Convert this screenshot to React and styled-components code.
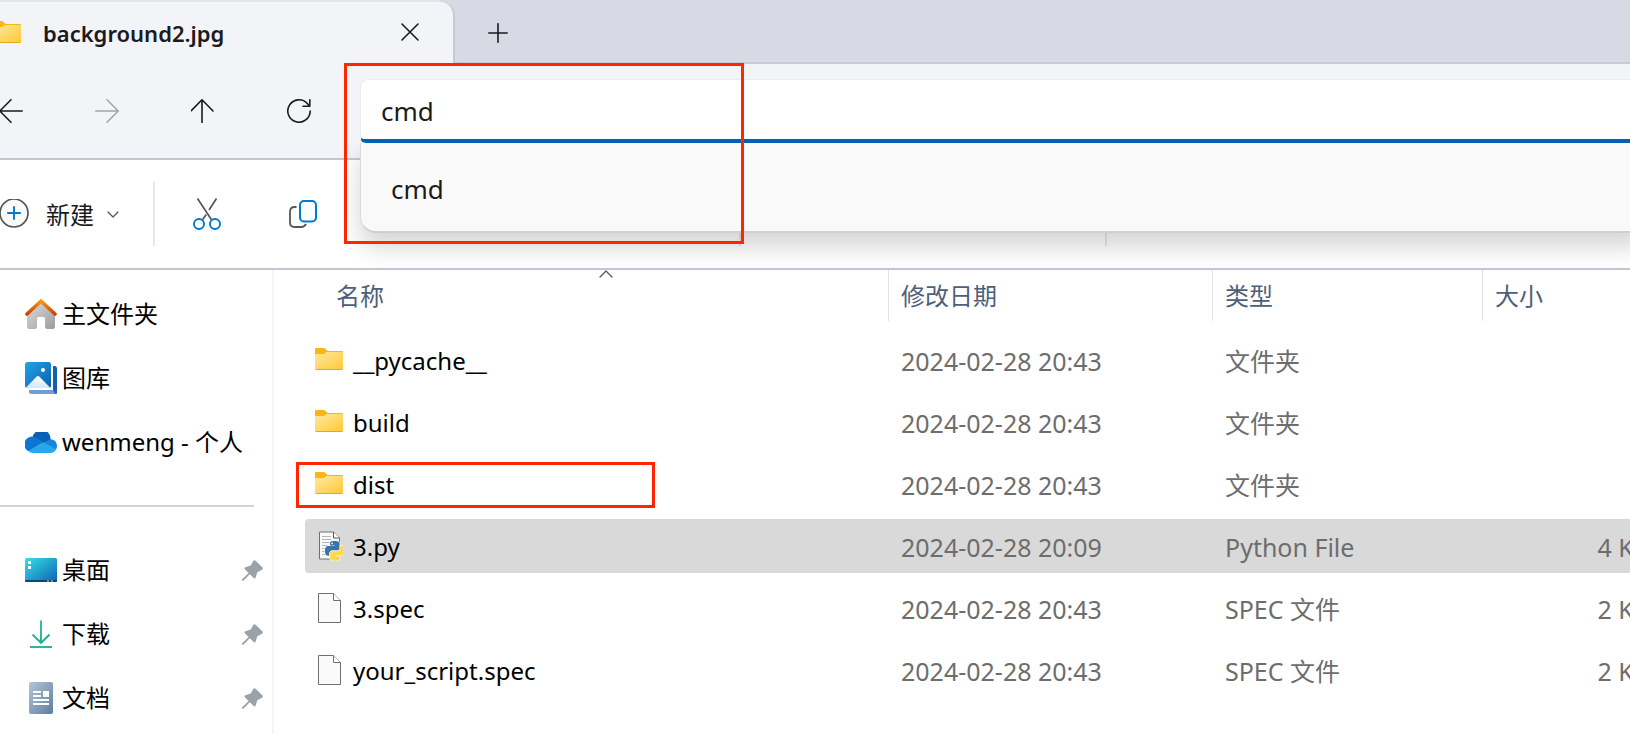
import React from "react";
import styled, { createGlobalStyle, css } from "styled-components";

const GlobalStyle = createGlobalStyle`
  *, *::before, *::after { box-sizing: border-box; }
  body {
    margin: 0;
    background: #fff;
    color: #000;
    font-family: "Noto Sans", "Noto Sans CJK SC", sans-serif;
    font-size: 24px;
    overflow: hidden;
  }
  button, input { font: inherit; color: inherit; }
`;

const Window = styled.div`
  display: flex;
  flex-direction: column;
  min-height: 100vh;
  overflow: hidden;
`;

/* ---------- tab strip ---------- */

const TabStrip = styled.header`
  display: flex;
  height: 64px;
  padding-top: 2px;
  background: linear-gradient(#e4e5ea 0 2px, transparent 2px) 0 0 / 440px 100% no-repeat, #d7d9e5;
  border-bottom: 2px solid #c9cad6;
`;

const Tab = styled.div`
  display: flex;
  align-items: center;
  flex: none;
  width: 455px;
  height: 62px;
  padding: 0 25px 2px 0;
  background: #f3f4f8;
  border-right: 2px solid #c9cad6;
  border-radius: 0 14px 0 0;
`;

const TabIcon = styled.span`
  display: flex;
  flex: none;
  margin-left: -7px;
`;

const TabTitle = styled.span`
  flex: 1;
  padding: 2px 0 0 22px;
  color: #1b1b1f;
  font-size: 22px;
  font-weight: 600;
  line-height: 32px;
`;

const IconButton = styled.button`
  display: flex;
  align-items: center;
  justify-content: center;
  flex: none;
  width: ${(p) => p.$width || 96}px;
  height: ${(p) => p.$height || 64}px;
  padding: 0;
  border: 0;
  background: none;
  color: ${(p) => (p.disabled ? "#a2a4a9" : "#1b1b1f")};
`;

/* ---------- navigation bar ---------- */

const NavBar = styled.div`
  display: flex;
  align-items: flex-start;
  height: 96px;
  background: #f3f4f8;
  border-bottom: 2px solid #c5c5d5;
`;

const NavButtons = styled.nav`
  display: flex;
  flex: none;
  align-items: center;
  height: 94px;
  margin-left: -37px;
`;

const AddressArea = styled.div`
  position: relative;
  z-index: 2;
  flex: 1;
  min-width: 0;
  margin: 15px -16px 0 13px;
`;

const AddressInput = styled.input`
  display: block;
  width: 100%;
  height: 64px;
  padding: 2px 20px 0;
  border: 1px solid #ebebed;
  border-bottom: 4px solid #0063b8;
  border-radius: 8px 8px 6px 6px;
  background: #fff;
  color: #1b1b1b;
  font-size: 26px;
  outline: none;
`;

const Suggestions = styled.ul`
  position: absolute;
  top: 100%;
  left: 0;
  right: 0;
  margin: 0;
  padding: 23px 0 19px;
  list-style: none;
  background: #f9f9f9;
  border: solid #dcdcdc;
  border-width: 0 1px 2px;
  border-bottom-color: #cfcfcf;
  border-radius: 0 0 16px 16px;
  box-shadow: 0 14px 24px rgba(0, 0, 0, 0.17);
`;

const Suggestion = styled.li`
  padding-left: 30px;
  color: #1b1b1b;
  font-size: 26px;
  line-height: 46px;
`;

const markStyle = css`
  position: absolute;
  border: 3px solid #ff2600;
  pointer-events: none;
`;

const AddressMark = styled.span`
  ${markStyle}
  top: -16px;
  left: -16px;
  width: 400px;
  height: 181px;
`;

const RowMark = styled.span`
  ${markStyle}
  top: 5px;
  left: -9px;
  width: 359px;
  height: 46px;
`;

/* ---------- command bar ---------- */

const CommandBar = styled.div`
  display: flex;
  align-items: center;
  height: 110px;
  border-bottom: 2px solid #c5c5d5;
`;

const NewButton = styled.button`
  display: flex;
  align-items: center;
  flex: none;
  width: 153px;
  height: 64px;
  padding: 0;
  border: 0;
  background: none;
  color: #1b1b1b;
`;

const NewLabel = styled.span`
  padding: 2px 13px 0 16px;
  line-height: 32px;
`;

const Divider = styled.span`
  flex: none;
  width: 2px;
  height: 64px;
  margin: 0 4px 0 ${(p) => p.$before || 0}px;
  background: #e8e8e8;
`;

/* ---------- body ---------- */

const Body = styled.div`
  display: flex;
  flex: 1;
  min-width: 0;
`;

const Sidebar = styled.aside`
  flex: none;
  width: 274px;
  padding-top: 12px;
  border-right: 2px solid #f5f5f5;
`;

const SideList = styled.ul`
  margin: 0;
  padding: 0;
  list-style: none;
`;

const SideItem = styled.li`
  display: flex;
  align-items: center;
  height: 64px;
  padding: 0 9px 0 25px;
`;

const SideIcon = styled.span`
  display: flex;
  justify-content: center;
  flex: none;
  width: 32px;
`;

const SideLink = styled.a`
  flex: 1;
  padding-left: 5px;
  color: #000;
  line-height: 32px;
  text-decoration: none;
  white-space: nowrap;
`;

const SideRule = styled.hr`
  height: 2px;
  margin: 31px 18px 31px 0;
  border: 0;
  background: #d4d4d4;
`;

const FilePane = styled.main`
  flex: 1;
  min-width: 0;
  padding-left: 31px;
  overflow: hidden;
`;

const FileTable = styled.table`
  width: 1357px;
  table-layout: fixed;
  border-collapse: separate;
  border-spacing: 0;
`;

const HeadCell = styled.th`
  position: relative;
  height: 59px;
  padding: 0;
  vertical-align: top;
  text-align: left;
  font-weight: 400;
  color: #4c607a;
`;

const HeadLabel = styled.div`
  height: 51px;
  padding-left: ${(p) => (p.$first ? 31 : 12)}px;
  border-left: ${(p) => (p.$first ? "0" : "1px solid #e2e2e2")};
  line-height: 52px;
`;

const SortMark = styled.span`
  position: absolute;
  top: 0;
  left: 294px;
  display: flex;
`;

const Cell = styled.td`
  position: relative;
  height: 62px;
  padding: 2px 0 0 13px;
  border: solid transparent;
  border-width: 4px 0;
  background: ${(p) => (p.$selected ? "#d9d9d9" : "transparent")};
  background-clip: padding-box;
  color: #6d6d6d;
  font-size: 25px;
  line-height: 32px;
  white-space: nowrap;
`;

const NameCell = styled(Cell)`
  padding: 0 0 0 10px;
  border-radius: 4px 0 0 4px / 8px 0 0 8px;
  color: #000;
  font-size: 24px;
`;

const SizeCell = styled(Cell)`
  padding: 2px 12px 0 0;
  text-align: right;
`;

const FileEntry = styled.span`
  display: flex;
  align-items: center;
`;

const FileIcon = styled.span`
  display: flex;
  justify-content: center;
  flex: none;
  width: 28px;
  margin-right: 10px;
  padding-bottom: ${(p) => (p.$kind === "folder" ? 2 : 0)}px;
`;

const FileName = styled.span`
  padding-top: 2px;
`;

/* ---------- icons ---------- */

const Stroke = ({ w = 24, h = 24, sw = 1.6, children, color = "currentColor" }) => (
  <svg width={w} height={h} viewBox={`0 0 ${w} ${h}`} fill="none" stroke={color} strokeWidth={sw} strokeLinecap="round" strokeLinejoin="round" aria-hidden="true">
    {children}
  </svg>
);

const FolderIcon = ({ id }) => (
  <svg width="28" height="22" viewBox="0 0 28 22" aria-hidden="true">
    <defs>
      <linearGradient id={id} x1="0" y1="0" x2="1" y2="1">
        <stop offset="0" stopColor="#ffe8a0" />
        <stop offset="1" stopColor="#ffc934" />
      </linearGradient>
    </defs>
    <path d="M0 1Q0 0 1 0H8.500Q9.600 0 10.500 1L12.500 3H27Q28 3 28 4V8H0Z" fill="#f9b416" />
    <path d="M0 7Q0 6 1 6H8.500Q9.500 6 10.200 5.300L11.200 4H27.500Q28 4 28 5V20.500Q28 22 26.500 22H1.500Q0 22 0 20.500Z" fill={`url(#${id})`} />
    <path d="M.3 20.800Q.6 21.500 1.500 21.500H26.500Q27.500 21.500 27.700 20.800" fill="none" stroke="#e8a81e" />
  </svg>
);

const BlankFileIcon = () => (
  <svg width="23" height="30" viewBox="0 0 23 30" aria-hidden="true">
    <path d="M.5.5H15.500L22.500 7.500V29.500H.5Z" fill="#fafafa" stroke="#707070" />
    <path d="M15.500.5V7.500H22.500" fill="#fff" stroke="#707070" />
  </svg>
);

const PythonFileIcon = () => (
  <svg width="28" height="31" viewBox="0 0 28 31" aria-hidden="true">
    <path d="M4.500 1H18.500L24.500 7V28H4.500Z" fill="#fafafa" stroke="#707070" />
    <path d="M18.500 1V7H24.500" fill="#fff" stroke="#555" />
    <path d="M7 5.500h9M7 8.500h9M7 11.500h14M7 14.500h6M7 17.500h3M7 20.500h3M7 23.500h3" stroke="#b5b5b5" />
    <g transform="translate(10 10) scale(.82)" stroke="#f5f5f5" strokeWidth="1.600" paintOrder="stroke">
      <path fill="#3a74a8" d="M14.250.18l.9.2.73.26.59.3.45.32.34.34.25.34.16.33.1.3.04.26.02.2-.01.13V8.500l-.05.63-.13.55-.21.46-.26.38-.3.31-.33.25-.35.19-.35.14-.33.1-.3.07-.26.04-.21.02H8.770l-.69.05-.59.14-.5.22-.41.27-.33.32-.27.35-.2.36-.15.37-.1.35-.07.32-.04.27-.02.21v3.060H3.170l-.21-.03-.28-.07-.32-.12-.35-.18-.36-.26-.36-.36-.35-.46-.32-.59-.28-.73-.21-.88-.14-1.050-.05-1.230.06-1.220.16-1.040.24-.87.32-.71.36-.57.4-.44.42-.33.42-.24.4-.16.36-.1.32-.05.24-.01h.16l.06.01h8.160v-.83H6.180l-.01-2.750-.02-.37.05-.34.11-.31.17-.28.25-.26.31-.23.38-.2.44-.18.51-.15.58-.12.64-.1.71-.06.77-.04.84-.02 1.270.05z" />
      <path fill="#ffd94a" d="M21.040 6.110l.28.06.32.12.35.18.36.27.36.35.35.47.32.59.28.73.21.88.14 1.040.05 1.230-.06 1.230-.16 1.040-.24.86-.32.71-.36.57-.4.45-.42.33-.42.24-.4.16-.36.09-.32.05-.24.02-.16-.01h-8.220v.82h5.840l.01 2.760.02.36-.05.34-.11.31-.17.29-.25.25-.31.24-.38.2-.44.17-.51.15-.58.13-.64.09-.71.07-.77.04-.84.01-1.270-.04-1.070-.14-.9-.2-.73-.25-.59-.3-.45-.33-.34-.34-.25-.34-.16-.33-.1-.3-.04-.25-.02-.2.01-.13v-5.340l.05-.64.13-.54.21-.46.26-.38.3-.32.33-.24.35-.2.35-.14.33-.1.3-.06.26-.04.21-.02.13-.01h5.840l.69-.05.59-.14.5-.21.41-.28.33-.32.27-.35.2-.36.15-.36.1-.35.07-.32.04-.28.02-.21V6.070h2.090z" />
      <circle cx="8.700" cy="2.900" r="1" fill="#fff" stroke="none" />
      <circle cx="15.300" cy="21.100" r="1" fill="#f0b93a" stroke="none" />
    </g>
  </svg>
);

const HomeIcon = () => (
  <svg width="32" height="30" viewBox="0 0 32 30" aria-hidden="true">
    <defs>
      <linearGradient id="homeBody" x1="0" y1="0" x2="1" y2="1">
        <stop offset="0" stopColor="#dcdcdc" />
        <stop offset="1" stopColor="#9c9c9c" />
      </linearGradient>
      <linearGradient id="homeRoof" x1="0" y1="0" x2="0" y2="1">
        <stop offset="0" stopColor="#f59b12" />
        <stop offset="1" stopColor="#cf3f0b" />
      </linearGradient>
    </defs>
    <path d="M16 3L30 15V27.500Q30 30 27.500 30H22.500Q20 30 20 27.500V19.500Q20 18 18.500 18H13.500Q12 18 12 19.500V27.500Q12 30 9.500 30H4.500Q2 30 2 27.500V15Z" fill="url(#homeBody)" />
    <path d="M2 15L16 2L30 15" fill="none" stroke="url(#homeRoof)" strokeWidth="3.600" strokeLinecap="round" strokeLinejoin="round" />
  </svg>
);

const GalleryIcon = () => (
  <svg width="32" height="32" viewBox="0 0 32 32" aria-hidden="true">
    <defs>
      <linearGradient id="photo" x1="0" y1="0" x2="1" y2="1">
        <stop offset="0" stopColor="#1fa5ea" />
        <stop offset="1" stopColor="#0c5fae" />
      </linearGradient>
      <linearGradient id="hill" x1="0" y1="0" x2="0" y2="1">
        <stop offset="0" stopColor="#fff" />
        <stop offset="1" stopColor="#cfe6fb" />
      </linearGradient>
    </defs>
    <path d="M28 4H30Q32 4 32 6.500V32L28 28Z" fill="#1560ad" />
    <path d="M4 28H28L32 32H6.500Q4 32 4 29.500Z" fill="#6c9fd6" />
    <path d="M28 28L32 29V30Q32 32 30 32Z" fill="#2a69b2" />
    <rect width="26" height="26" rx="2.500" fill="url(#photo)" />
    <path d="M1 25.500L11.500 14.700Q13 13.300 14.500 14.700L25 25.500Q24.500 26 23.500 26H2.500Q1.500 26 1 25.500Z" fill="url(#hill)" />
    <circle cx="18" cy="8" r="2" fill="#fff" />
  </svg>
);

const CloudIcon = () => (
  <svg width="32" height="21" viewBox="0 0 32 21" aria-hidden="true">
    <path d="M7.500 5.800A9 9 0 0 1 25.500 8L17 12Z" fill="#0560b6" />
    <path d="M18 11L25.500 7.200A6.800 6.800 0 0 1 31 17.500L22 15Z" fill="#1489dc" />
    <path d="M10 5.200Q12 5.400 18.200 10.300L4 19.500A7.300 7.300 0 0 1 10 5.200Z" fill="#0a76d2" />
    <path d="M3.500 18.700L18.200 10.300L31.200 17.200Q29.500 21 25.200 21H7.500Q5 21 3.500 18.700Z" fill="#28a8ea" />
  </svg>
);

const DesktopIcon = () => (
  <svg width="32" height="24" viewBox="0 0 32 24" aria-hidden="true">
    <defs>
      <linearGradient id="desk" x1="0" y1="0" x2="1" y2="1">
        <stop offset="0" stopColor="#35e0e6" />
        <stop offset="1" stopColor="#0d62b4" />
      </linearGradient>
    </defs>
    <rect width="32" height="24" rx="1.500" fill="url(#desk)" />
    <path d="M0 22H32V22.500Q32 24 30.500 24H1.500Q0 24 0 22.500Z" fill="#0b4777" />
    <path d="M3 3h3v3H3zM3 8h3v3H3z" fill="#fff" />
    <path d="M22 22.500h2v1h-2zM26 22.500h2v1h-2z" fill="#cfe3f5" />
  </svg>
);

const DownloadIcon = () => (
  <svg width="22" height="28" viewBox="0 0 22 28" fill="none" strokeWidth="1.900" aria-hidden="true">
    <defs>
      <linearGradient id="down" gradientUnits="userSpaceOnUse" x1="0" y1="0" x2="22" y2="28">
        <stop offset="0" stopColor="#34c88a" />
        <stop offset="1" stopColor="#12a295" />
      </linearGradient>
    </defs>
    <path d="M11 .5V23M2.500 14.500L11 23L19.500 14.500" stroke="url(#down)" />
    <path d="M0 27H22" stroke="#22b58f" />
  </svg>
);

const DocumentsIcon = () => (
  <svg width="24" height="32" viewBox="0 0 24 32" aria-hidden="true">
    <defs>
      <linearGradient id="docs" x1="0" y1="0" x2="1" y2="1">
        <stop offset="0" stopColor="#b3c6da" />
        <stop offset="1" stopColor="#5f7d9e" />
      </linearGradient>
    </defs>
    <rect width="24" height="32" rx="2" fill="url(#docs)" />
    <path d="M4 9h8v2H4zM4 13h8v2H4zM14 9h6v6h-6zM4 17h16v2H4zM4 21h16v2H4z" fill="#fff" />
  </svg>
);

const PinIcon = () => (
  <svg width="21" height="21" viewBox="0 0 21 21" aria-hidden="true">
    <path d="M11.300.9Q12.400-.4 13.700.8L20.200 7.300Q21.500 8.700 19.900 9.700L15.300 12.200L13.700 17.600Q13 19.200 11.700 18.100L7.800 14.300L1.300 20.700H0V19.500L6.500 13L2.900 9.200Q1.800 7.900 3.300 7.200L8.700 5.500Z" fill="#98a2a9" />
  </svg>
);

const CutIcon = () => (
  <svg width="28" height="32" viewBox="0 0 28 32" fill="none" strokeWidth="1.700" aria-hidden="true">
    <path d="M4.500.5L18.500 21.800M23.500.5L16 12M13.300 16.500L9.500 21.800" stroke="#565656" />
    <circle cx="6" cy="26" r="5" stroke="#0078d4" strokeWidth="1.900" />
    <circle cx="22" cy="26" r="5" stroke="#0078d4" strokeWidth="1.900" />
  </svg>
);

const CopyIcon = () => (
  <svg width="28" height="28" viewBox="0 0 28 28" fill="none" strokeWidth="1.800" aria-hidden="true">
    <path d="M7.500 7H5.500Q1 7 1 11.500V22.500Q1 27 5.500 27H12Q15.500 27 17 24" stroke="#565656" />
    <rect x="11" y="1" width="16" height="20.500" rx="4" fill="#fafdff" stroke="#0078d4" strokeWidth="2" />
  </svg>
);

const NewIcon = () => (
  <svg width="30" height="30" viewBox="0 0 30 30" fill="none" aria-hidden="true">
    <circle cx="14" cy="14" r="14" fill="#fafafa" stroke="#565656" strokeWidth="1.700" />
    <path d="M14 7.200V20.800M7.200 14H20.800" stroke="#0078d4" strokeWidth="1.900" />
  </svg>
);

/* ---------- data ---------- */

const PLACES = [
  { label: "主文件夹", icon: <HomeIcon /> },
  { label: "图库", icon: <GalleryIcon /> },
  { label: "wenmeng - 个人", icon: <CloudIcon /> },
];

const PINNED = [
  { label: "桌面", icon: <DesktopIcon /> },
  { label: "下载", icon: <DownloadIcon /> },
  { label: "文档", icon: <DocumentsIcon /> },
];

const FILES = [
  { name: "__pycache__", kind: "folder", date: "2024-02-28 20:43", type: "文件夹" },
  { name: "build", kind: "folder", date: "2024-02-28 20:43", type: "文件夹" },
  { name: "dist", kind: "folder", date: "2024-02-28 20:43", type: "文件夹", marked: true },
  { name: "3.py", kind: "python", date: "2024-02-28 20:09", type: "Python File", size: "4 KB", selected: true },
  { name: "3.spec", kind: "blank", date: "2024-02-28 20:43", type: "SPEC 文件", size: "2 KB" },
  { name: "your_script.spec", kind: "blank", date: "2024-02-28 20:43", type: "SPEC 文件", size: "2 KB" },
];

const fileIcon = (file) => {
  if (file.kind === "folder") return <FolderIcon id={`folder-${file.name}`} />;
  if (file.kind === "python") return <PythonFileIcon />;
  return <BlankFileIcon />;
};

const PlaceList = ({ items, pinned }) => (
  <SideList>
    {items.map((item) => (
      <SideItem key={item.label}>
        <SideIcon>{item.icon}</SideIcon>
        <SideLink href="#">{item.label}</SideLink>
        {pinned && <PinIcon />}
      </SideItem>
    ))}
  </SideList>
);

export default function App() {
  return (
    <Window>
      <GlobalStyle />
      <TabStrip>
        <Tab>
          <TabIcon><FolderIcon id="folder-tab" /></TabIcon>
          <TabTitle>background2.jpg</TabTitle>
          <IconButton $width={36} $height={36} aria-label="Close tab">
            <Stroke w={18} h={18}><path d="M1 1L17 17M17 1L1 17" /></Stroke>
          </IconButton>
        </Tab>
        <IconButton $width={86} $height={62} aria-label="New tab">
          <Stroke w={20} h={20}><path d="M10 .8V19.200M.8 10H19.200" /></Stroke>
        </IconButton>
      </TabStrip>

      <NavBar>
        <NavButtons>
          <IconButton aria-label="Back">
            <Stroke><path d="M23.200 12H.8M12 .8L.8 12L12 23.200" /></Stroke>
          </IconButton>
          <IconButton aria-label="Forward" disabled>
            <Stroke><path d="M.8 12H23.200M12 .8L23.200 12L12 23.200" /></Stroke>
          </IconButton>
          <IconButton aria-label="Up">
            <Stroke><path d="M11 23.500V.8M0 12L11 .8L22 12" /></Stroke>
          </IconButton>
          <IconButton aria-label="Refresh">
            <Stroke><path d="M23.200 12A11.200 11.200 0 1 1 20.300 4.500L22.500 7M22.800 .8V7.200H16" /></Stroke>
          </IconButton>
        </NavButtons>
        <AddressArea>
          <AddressInput aria-label="Address" defaultValue="cmd" />
          <Suggestions>
            <Suggestion>cmd</Suggestion>
          </Suggestions>
          <AddressMark />
        </AddressArea>
      </NavBar>

      <CommandBar>
        <NewButton>
          <NewIcon />
          <NewLabel>新建</NewLabel>
          <Stroke w={12} h={7} sw={1.3} color="#565656"><path d="M1 1L6 6L11 1" /></Stroke>
        </NewButton>
        <Divider />
        <IconButton aria-label="Cut"><CutIcon /></IconButton>
        <IconButton aria-label="Copy"><CopyIcon /></IconButton>
        <Divider $before={388} />
        <Divider $before={360} />
      </CommandBar>

      <Body>
        <Sidebar>
          <PlaceList items={PLACES} />
          <SideRule />
          <PlaceList items={PINNED} pinned />
        </Sidebar>
        <FilePane>
          <FileTable>
            <colgroup>
              <col width="583" />
              <col width="324" />
              <col width="270" />
              <col width="180" />
            </colgroup>
            <thead>
              <tr>
                <HeadCell aria-sort="ascending">
                  <HeadLabel $first>名称</HeadLabel>
                  <SortMark>
                    <Stroke w={14} h={8} sw={1.3} color="#565656"><path d="M1 7L7 1L13 7" /></Stroke>
                  </SortMark>
                </HeadCell>
                <HeadCell><HeadLabel>修改日期</HeadLabel></HeadCell>
                <HeadCell><HeadLabel>类型</HeadLabel></HeadCell>
                <HeadCell><HeadLabel>大小</HeadLabel></HeadCell>
              </tr>
            </thead>
            <tbody>
              {FILES.map((file) => (
                <tr key={file.name}>
                  <NameCell $selected={file.selected}>
                    <FileEntry>
                      <FileIcon $kind={file.kind}>{fileIcon(file)}</FileIcon>
                      <FileName>{file.name}</FileName>
                    </FileEntry>
                    {file.marked && <RowMark />}
                  </NameCell>
                  <Cell $selected={file.selected}>{file.date}</Cell>
                  <Cell $selected={file.selected}>{file.type}</Cell>
                  <SizeCell $selected={file.selected}>{file.size}</SizeCell>
                </tr>
              ))}
            </tbody>
          </FileTable>
        </FilePane>
      </Body>
    </Window>
  );
}
